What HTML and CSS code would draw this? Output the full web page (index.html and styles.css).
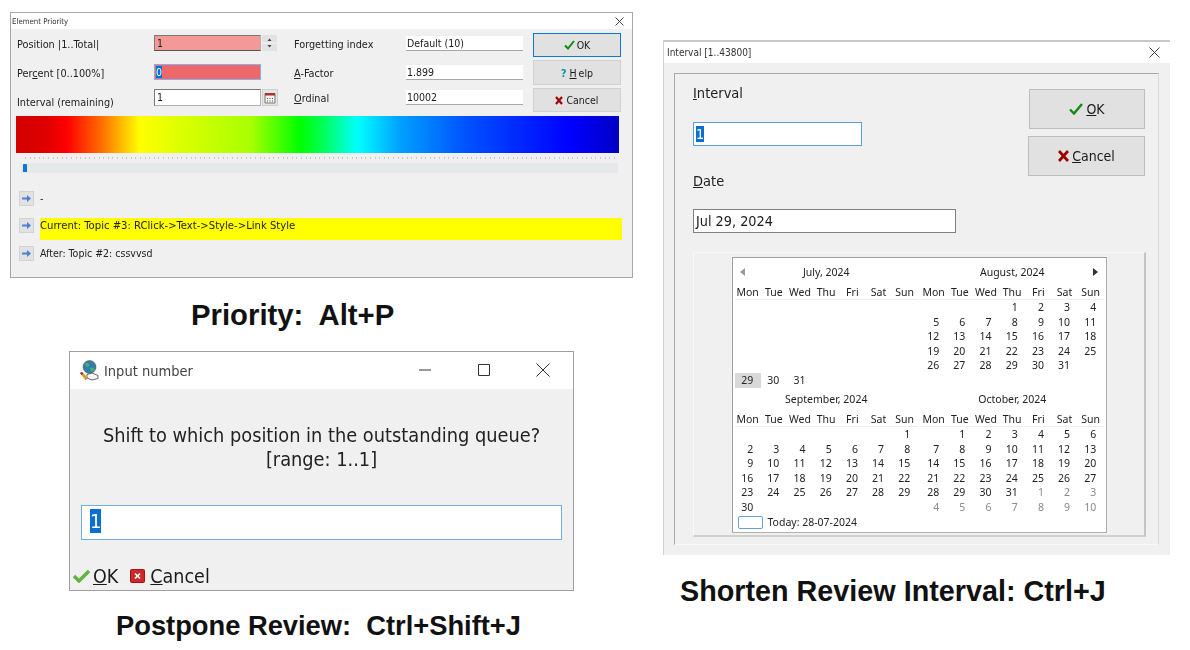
FILE: index.html
```html
<!DOCTYPE html>
<html lang="en">
<head>
<meta charset="utf-8">
<title>Review shortcuts</title>
<link rel="stylesheet" href="styles.css">
</head>
<body>
<section class="win pri">
  <header class="pri-title"><span>Element Priority</span>
    <svg class="x" width="9" height="9" viewBox="0 0 9 9"><path d="M.5.5l8 8M8.5.5l-8 8" stroke="#444" fill="none"/></svg>
  </header>
  <div class="pri-body">
    <div class="pri-top">
      <div class="pri-fields">
        <span class="lbl">Position |1..Total|</span>
        <div class="fld sunk rose"><span>1</span></div>
        <div class="spin"><svg width="15" height="16" viewBox="0 0 15 16"><path d="M5.500 6l2-2.500 2 2.500zM5.500 10h4l-2 2.500z" fill="#444"/><path d="M0 8h15" stroke="#f8f8f8"/></svg></div>
        <span class="lbl">Forgetting index</span>
        <div class="fld flat"><span>Default (10)</span></div>
        <span class="lbl">Per<u>c</u>ent [0..100%]</span>
        <div class="fld focus red"><span class="sel">0</span></div>
        <i></i>
        <span class="lbl"><u>A</u>-Factor</span>
        <div class="fld flat"><span>1.899</span></div>
        <span class="lbl low">Interval (remaining)</span>
        <div class="fld sunk white"><span>1</span></div>
        <div class="calbtn"><svg width="12" height="12" viewBox="0 0 12 12"><path d="M1 1.500h10v9.500H1z" fill="#f4f0ec" stroke="#777"/><path d="M1 1h10v2.500H1z" fill="#a33"/><path d="M3 6h1v1H3zM5.500 6h1v1h-1zM8 6h1v1H8zM3 8.500h1v1H3zM5.500 8.500h1v1h-1zM8 8.500h1v1H8z" fill="#555"/></svg></div>
        <span class="lbl"><u>O</u>rdinal</span>
        <div class="fld flat"><span>10002</span></div>
      </div>
      <div class="pri-btns">
        <button class="btn primary"><svg width="11" height="10" viewBox="0 0 11 10"><path d="M1 5.500l3 3L10 1" stroke="#128a12" stroke-width="2" fill="none"/></svg>OK</button>
        <button class="btn b2"><b class="q">?</b> <u>H</u>elp</button>
        <button class="btn b3"><svg width="8" height="9" viewBox="0 0 8 9"><path d="M1 1l6 7M7 1L1 8" stroke="#a00000" stroke-width="2.200" fill="none"/></svg>Cancel</button>
      </div>
    </div>
    <div class="rainbow"></div>
    <div class="ticks"></div>
    <div class="track"><div class="thumb"></div></div>
    <div class="qrow r1"><div class="arrow"><svg width="9" height="7" viewBox="0 0 9 7"><path d="M0 2.500h5V0l4 3.500L5 7V4.500H0z" fill="#4a80d8"/></svg></div><span class="qtext">-</span></div>
    <div class="qrow r2"><div class="arrow"><svg width="9" height="7" viewBox="0 0 9 7"><path d="M0 2.500h5V0l4 3.500L5 7V4.500H0z" fill="#4a80d8"/></svg></div><span class="qtext cur">Current: Topic #3: RClick-&gt;Text-&gt;Style-&gt;Link Style</span></div>
    <div class="qrow r3"><div class="arrow"><svg width="9" height="7" viewBox="0 0 9 7"><path d="M0 2.500h5V0l4 3.500L5 7V4.500H0z" fill="#4a80d8"/></svg></div><span class="qtext">After: Topic #2: cssvvsd</span></div>
  </div>
</section>
<h2 class="cap cap1">Priority:  Alt+P</h2>

<section class="win inp">
  <header class="inp-title">
    <svg class="appicon" width="20" height="21" viewBox="0 0 20 21">
      <circle cx="10.500" cy="7" r="6.500" fill="#2f7fa8" stroke="#555" stroke-width=".6"/>
      <path d="M6 3.500c2-1 3-.5 4 .5s0 2.500-1.500 3-2.500-2-2.500-3.500zM12 8c2-.5 3.500 0 3.500 1.500S13 12 12 11s-1-2.500 0-3z" fill="#47b26b"/>
      <path d="M8 14.500l5-1.500 6 2.500v3l-6 1.500-5-2z" fill="#f6f6f6" stroke="#444" stroke-width=".8"/>
      <path d="M1 13l2-1 6 6-3 1.500z" fill="#d2a020"/><path d="M1 13l2-1 1.500 1.500-2 1.500z" fill="#b32020"/><path d="M6 19.500l3-1.500-3 2z" fill="#222"/>
    </svg>
    <span class="inp-name">Input number</span>
    <svg class="wc wmin" width="12" height="12" viewBox="0 0 12 12"><path d="M0 6h12" stroke="#333"/></svg>
    <svg class="wc wmax" width="12" height="12" viewBox="0 0 12 12"><path d="M.5.500h11v11H.500z" stroke="#333" fill="none"/></svg>
    <svg class="wc wclose" width="14" height="14" viewBox="0 0 14 14"><path d="M.5.500l13 13M13.500.5l-13 13" stroke="#333" fill="none"/></svg>
  </header>
  <div class="inp-body">
    <p class="inp-q">Shift to which position in the outstanding queue?<br>[range: 1..1]</p>
    <div class="inp-field"><span class="sel">1</span></div>
    <div class="inp-actions">
      <span class="act"><svg width="17" height="14" viewBox="0 0 17 14"><path d="M1 7l5 5L16 2" stroke="#63b33c" stroke-width="3.400" fill="none"/></svg><span><u>O</u>K</span></span>
      <span class="act act2"><svg class="redbox" width="15" height="14" viewBox="0 0 15 14"><rect x=".5" y=".5" width="14" height="13" rx="1" fill="#cc2a2a" stroke="#a11"/><path d="M5 4.500l5 5M10 4.500l-5 5" stroke="#fff" stroke-width="1.600"/></svg><span><u>C</u>ancel</span></span>
    </div>
  </div>
</section>
<h2 class="cap cap2">Postpone Review:  Ctrl+Shift+J</h2>

<section class="win ivl">
  <header class="ivl-title"><span>Interval [1..43800]</span>
    <svg class="x" width="11" height="11" viewBox="0 0 11 11"><path d="M.5.500l10 10M10.500.5l-10 10" stroke="#444" fill="none"/></svg>
  </header>
  <div class="ivl-body">
    <div class="frame">
      <div class="ivl-top">
        <div class="ivl-form">
          <label class="ivl-lbl"><u>I</u>nterval</label>
          <div class="ivl-input one"><span class="sel">1</span></div>
          <label class="ivl-lbl date"><u>D</u>ate</label>
          <div class="ivl-input two"><span>Jul 29, 2024</span></div>
        </div>
        <div class="ivl-btns">
          <button class="btn2"><svg width="14" height="12" viewBox="0 0 14 12"><path d="M1 6.500l4 4L13 1" stroke="#128a12" stroke-width="2.400" fill="none"/></svg><span><u>O</u>K</span></button>
          <button class="btn2 wide"><svg width="11" height="12" viewBox="0 0 11 12"><path d="M1 1l9 10M10 1L1 11" stroke="#a00000" stroke-width="2.800" fill="none"/></svg><span><u>C</u>ancel</span></button>
        </div>
      </div>
      <div class="panel">
        <div class="cal">
          <svg class="nav prev" width="5" height="8" viewBox="0 0 5 8"><path d="M5 0v8L0 4z" fill="#999"/></svg>
          <svg class="nav next" width="5" height="8" viewBox="0 0 5 8"><path d="M0 0v8l5-4z" fill="#333"/></svg>
          <div class="months">
            <div class="month">
              <div class="mt">July, 2024</div>
              <div class="dow"><span>Mon</span><span>Tue</span><span>Wed</span><span>Thu</span><span>Fri</span><span>Sat</span><span>Sun</span></div>
              <div class="days">
                <span class="d r6 hl">29</span><span class="d r6">30</span><span class="d r6">31</span>
              </div>
            </div>
            <div class="month">
              <div class="mt">August, 2024</div>
              <div class="dow"><span>Mon</span><span>Tue</span><span>Wed</span><span>Thu</span><span>Fri</span><span>Sat</span><span>Sun</span></div>
              <div class="days">
                <span class="d c4">1</span><span class="d">2</span><span class="d">3</span><span class="d">4</span>
                <span class="d">5</span><span class="d">6</span><span class="d">7</span><span class="d">8</span><span class="d">9</span><span class="d">10</span><span class="d">11</span>
                <span class="d">12</span><span class="d">13</span><span class="d">14</span><span class="d">15</span><span class="d">16</span><span class="d">17</span><span class="d">18</span>
                <span class="d">19</span><span class="d">20</span><span class="d">21</span><span class="d">22</span><span class="d">23</span><span class="d">24</span><span class="d">25</span>
                <span class="d">26</span><span class="d">27</span><span class="d">28</span><span class="d">29</span><span class="d">30</span><span class="d">31</span>
              </div>
            </div>
            <div class="month">
              <div class="mt">September, 2024</div>
              <div class="dow"><span>Mon</span><span>Tue</span><span>Wed</span><span>Thu</span><span>Fri</span><span>Sat</span><span>Sun</span></div>
              <div class="days">
                <span class="d c7">1</span>
                <span class="d">2</span><span class="d">3</span><span class="d">4</span><span class="d">5</span><span class="d">6</span><span class="d">7</span><span class="d">8</span>
                <span class="d">9</span><span class="d">10</span><span class="d">11</span><span class="d">12</span><span class="d">13</span><span class="d">14</span><span class="d">15</span>
                <span class="d">16</span><span class="d">17</span><span class="d">18</span><span class="d">19</span><span class="d">20</span><span class="d">21</span><span class="d">22</span>
                <span class="d">23</span><span class="d">24</span><span class="d">25</span><span class="d">26</span><span class="d">27</span><span class="d">28</span><span class="d">29</span>
                <span class="d">30</span>
              </div>
            </div>
            <div class="month">
              <div class="mt">October, 2024</div>
              <div class="dow"><span>Mon</span><span>Tue</span><span>Wed</span><span>Thu</span><span>Fri</span><span>Sat</span><span>Sun</span></div>
              <div class="days">
                <span class="d c2">1</span><span class="d">2</span><span class="d">3</span><span class="d">4</span><span class="d">5</span><span class="d">6</span>
                <span class="d">7</span><span class="d">8</span><span class="d">9</span><span class="d">10</span><span class="d">11</span><span class="d">12</span><span class="d">13</span>
                <span class="d">14</span><span class="d">15</span><span class="d">16</span><span class="d">17</span><span class="d">18</span><span class="d">19</span><span class="d">20</span>
                <span class="d">21</span><span class="d">22</span><span class="d">23</span><span class="d">24</span><span class="d">25</span><span class="d">26</span><span class="d">27</span>
                <span class="d">28</span><span class="d">29</span><span class="d">30</span><span class="d">31</span><span class="d g">1</span><span class="d g">2</span><span class="d g">3</span>
                <span class="d g">4</span><span class="d g">5</span><span class="d g">6</span><span class="d g">7</span><span class="d g">8</span><span class="d g">9</span><span class="d g">10</span>
              </div>
            </div>
          </div>
          <div class="today"><span class="todaybox"></span><span>Today: 28-07-2024</span></div>
        </div>
      </div>
    </div>
  </div>
</section>
<h2 class="cap cap3">Shorten Review Interval: Ctrl+J</h2>
</body>
</html>
```
FILE: styles.css
```css
* { box-sizing: border-box; }
html, body { margin: 0; padding: 0; }
body {
  width: 1190px; height: 650px; position: relative; overflow: hidden;
  background: #fff; color: #1a1a1a;
  font-family: "DejaVu Sans", "Liberation Sans", sans-serif;
  font-stretch: condensed;
}
u { text-underline-offset: 1px; text-decoration-thickness: 1px; }
.sel { background: #0a6fd0; color: #fff; }
button { font: inherit; color: inherit; padding: 0; margin: 0; }

/* free-canvas pieces */
.win { position: absolute; background: #f0f0f0; filter: blur(.3px); }
.pri { left: 10px; top: 12px; width: 623px; height: 266px; border: 1px solid #a8a8a8; border-top-width: 1px; }
.inp { left: 69px; top: 351px; width: 505px; height: 240px; border: 1px solid #a0a0a0; }
.ivl { left: 663px; top: 40px; width: 507px; height: 515px; border-top: 2px solid #c8c8c8; border-left: 1px solid #d0d0d0; }

.cap {
  position: absolute; margin: 0; white-space: pre; color: #111;
  font-family: "Liberation Sans", Arial, sans-serif; font-weight: 700; line-height: 34px; font-stretch: normal;
}
.cap1 { left: 191px; top: 298px; font-size: 29.300px; }
.cap2 { left: 116px; top: 609px; font-size: 27.300px; }
.cap3 { left: 680px; top: 574px; font-size: 28.750px; }

/* priority window */
.pri-title { height: 16px; background: #fff; display: flex; align-items: center; justify-content: space-between; padding: 0 8px 0 1px; font-size: 7.800px; color: #333; }
.pri-body { display: flex; flex-direction: column; padding: 4px 0 0 5px; font-size: 10.500px; }
.pri-top { display: flex; height: 82px; }
.pri-fields {
  display: grid; margin-top: 2px; margin-left: 1px;
  grid-template-columns: 137px 107px 33px 112px 117px;
  grid-template-rows: 29px 25px 17px; align-items: start;
}
.lbl { line-height: 16px; padding-top: 2px; color: #222; white-space: nowrap; font-size: 10.800px; }
.lbl.low { padding-top: 6px; }
.fld { height: 16px; line-height: 14px; padding-left: 2px; white-space: nowrap; overflow: hidden; }
.fld.flat { background: #fff; border-bottom: 1px solid #a8a8a8; border-top: 1px solid #eee; padding-left: 1px; }
.fld.sunk { border: 1px solid #b0b0b0; border-top-color: #777; border-left-color: #777; }
.fld.rose { background: #f39a99; border-bottom-color: #555; }
.fld.red { background: #ee686b; }
.fld.white { background: #fff; height: 17px; }
.fld.focus { border: 1px solid #7eb4ea; padding-left: 1px; }
.spin { width: 15px; height: 16px; margin-left: 1px; background: #e2e2e2; }
.spin svg { display: block; }
.calbtn { width: 16px; height: 17px; margin-left: 1px; background: #e4e4e4; border: 1px solid #d0d0d0; display: flex; align-items: center; justify-content: center; }
.pri-btns { display: flex; flex-direction: column; margin-left: 10px; width: 88px; }
.btn {
  width: 88px; height: 24px; background: #e1e1e1; border: 1px solid #d0d0d0;
  display: flex; align-items: center; justify-content: center; gap: 2px; font-size: 10.500px;
}
.btn.primary { border: 1px solid #0a78d4; }
.btn.b2 { margin-top: 3px; height: 25px; }
.btn.b3 { margin-top: 3px; gap: 3px; }
.q { color: #0a8ea8; font-weight: 700; margin-right: 1px; }
.rainbow {
  height: 37px; width: 603px; margin-top: 1px;
  background: linear-gradient(90deg, #d20000 0, #e00000 5%, #ff0000 8.500%, #ff6a00 14%, #ffff00 20.500%, #d4ff00 29%, #a8ff00 39%, #00ff00 47%, #00ff40 50%, #00ffff 56.700%, #00a0ff 63.700%, #0050ff 75%, #0020ff 85%, #0000ff 92%, #0000c4 100%);
}
.ticks {
  height: 2px; width: 590px; margin: 4px 0 0 9px;
  background: repeating-linear-gradient(90deg, #c8c8c8 0 1px, transparent 1px 4.600px);
}
.track { width: 597px; height: 10px; margin: 4px 0 0 5px; background: #e6e9e9; padding: 1px 0 0 2px; }
.thumb { width: 4px; height: 8px; background: #0a78d7; border-radius: 1px 1px 0 0; }
.qrow { display: flex; align-items: flex-start; margin-left: 3px; }
.r1 { margin-top: 18px; }
.r2 { margin-top: 12px; }
.r3 { margin-top: 13px; }
.arrow { width: 15px; height: 15px; background: #e2e2e2; border: 1px solid #d2d2d2; display: flex; align-items: center; justify-content: center; }
.qtext { margin-left: 6px; line-height: 13px; padding-top: 1px; white-space: nowrap; color: #222; }
.cur { background: #ffff00; width: 582px; height: 22px; margin-bottom: -7px; font-size: 11.200px; }

/* input number window */
.inp-title { height: 37px; background: #fff; display: flex; align-items: center; padding-left: 9px; position: relative; }
.appicon { display: block; }
.inp-name { margin-left: 5px; font-size: 14.500px; color: #444; }
.wc { position: absolute; top: 12px; }
.wmin { left: 349px; }
.wmax { left: 408px; }
.wclose { left: 466px; top: 11px; }
.inp-body { display: flex; flex-direction: column; padding: 35px 11px 0 11px; }
.inp-q { margin: 0; text-align: center; font-size: 19.800px; line-height: 24px; color: #222; }
.inp-field {
  height: 35px; margin-top: 33px; background: #fff; border: 1px solid #6fb0e6;
  font-size: 20px; line-height: 31px; padding-left: 8px;
}
.inp-actions { display: flex; align-items: center; margin: 24px 0 0 -8px; font-size: 19.500px; height: 24px; }
.act { display: flex; align-items: center; gap: 3px; }
.act2 { margin-left: 12px; gap: 5px; }

/* interval window */
.ivl-title { height: 21px; background: #fff; display: flex; align-items: center; justify-content: space-between; padding: 0 10px 0 3px; font-size: 10px; color: #333; }
.ivl-body { padding: 10px 11px 0 10px; height: 492px; }
.frame { height: 472px; border-top: 1px solid #a8a8a8; border-left: 1px solid #a8a8a8; border-right: 1px solid #d8d8d8; border-bottom: 1px solid #f8f8f8; padding: 0 12px 0 18px; }
.ivl-top { display: flex; justify-content: space-between; height: 178px; }
.ivl-form { padding-top: 10px; display: flex; flex-direction: column; }
.ivl-lbl { display: block; font-size: 14.500px; line-height: 18px; color: #222; }
.ivl-lbl.date { margin-top: 26px; }
.ivl-input { height: 24px; background: #fff; font-size: 14.300px; line-height: 22px; padding-left: 2px; white-space: nowrap; }
.ivl-input.one { width: 169px; margin-top: 20px; border: 1px solid #5aa0dc; }
.ivl-input.two { width: 263px; margin-top: 19px; border: 1px solid #808080; }
.ivl-btns { display: flex; flex-direction: column; align-items: flex-end; padding-top: 15px; margin-right: 1px; }
.btn2 {
  width: 116px; height: 40px; background: #e1e1e1; border: 1px solid #bdbdbd;
  display: flex; align-items: center; justify-content: center; gap: 3px; font-size: 14px;
}
.btn2.wide { width: 117px; margin-top: 7px; }
.panel {
  height: 285px; display: flex; justify-content: center; padding-top: 4px;
  border-top: 1px solid #f8f8f8; border-left: 1px solid #f8f8f8; border-right: 2px solid #c4c4c4; border-bottom: 2px solid #d0d0d0;
}
.cal {
  position: relative; width: 375px; height: 276px; background: #fff;
  border-top: 1px solid #a0a0a0; border-left: 1px solid #a0a0a0; border-right: 1px solid #b0b0b0; border-bottom: 1px solid #b0b0b0;
  padding: 6px 0 0 2px; font-family: "Noto Sans", "Open Sans", sans-serif; font-stretch: normal; font-size: 10.500px; color: #222;
}
.nav { position: absolute; top: 10px; }
.prev { left: 7px; }
.next { right: 8px; }
.months { display: grid; grid-template-columns: 183.500px 183.500px; column-gap: 2.500px; }
.month { height: 127px; }
.mt { height: 16px; line-height: 16px; text-align: center; }
.dow { display: grid; grid-template-columns: repeat(7, 26.200px); margin-top: 5px; height: 15px; line-height: 14px; text-align: center; border-bottom: 1px solid #eee; }
.days { display: grid; grid-template-columns: repeat(7, 26.200px); grid-template-rows: repeat(6, 14.600px); }
.d { text-align: right; padding-right: 7.500px; line-height: 14.600px; }
.g { color: #8a8a8a; }
.hl { background: #d9d9d9; }
.r6 { grid-row: 6; }
.c2 { grid-column-start: 2; }
.c4 { grid-column-start: 4; }
.c7 { grid-column-start: 7; }
.today { display: flex; align-items: center; gap: 5px; height: 14px; margin: -3px 0 0 3px; }
.todaybox { width: 25px; height: 13px; border: 1px solid #6a9fd8; border-radius: 2px; }
```
